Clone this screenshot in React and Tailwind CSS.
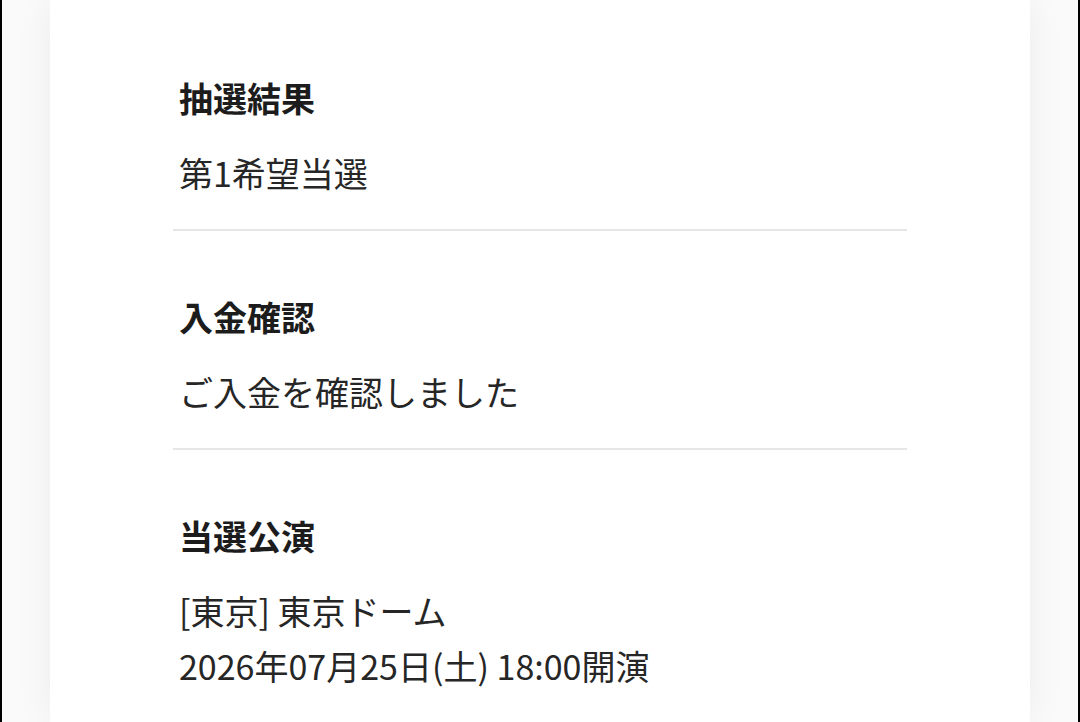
import React from 'react';

const sections = [
  { title: '抽選結果', lines: ['第1希望当選'] },
  { title: '入金確認', lines: ['ご入金を確認しました'] },
  { title: '当選公演', lines: ['[東京] 東京ドーム', '2026年07月25日(土) 18:00開演'] },
];

export default function App() {
  return (
    <div
      className="h-[722px] overflow-hidden flex border-x-2 border-black bg-[#fafafa] px-[48px]"
      style={{ fontFamily: '"Noto Sans CJK JP", "Noto Sans", sans-serif' }}
    >
      <div className="flex-1 bg-white shadow-[0_0_36px_rgba(0,0,0,0.06)] px-[123px] pt-[12px]">
        {sections.map((section) => (
          <div key={section.title} className="border-b-2 border-[#e6e6e6] px-[6px] pt-[58px] pb-[29px]">
            <h2 className="text-[34px] leading-[55px] font-bold text-[#1c1c1c]">{section.title}</h2>
            <div className="mt-[20px] text-[34px] leading-[55px] text-[#262626]">
              {section.lines.map((line) => (
                <p key={line}>{line}</p>
              ))}
            </div>
          </div>
        ))}
      </div>
    </div>
  );
}
